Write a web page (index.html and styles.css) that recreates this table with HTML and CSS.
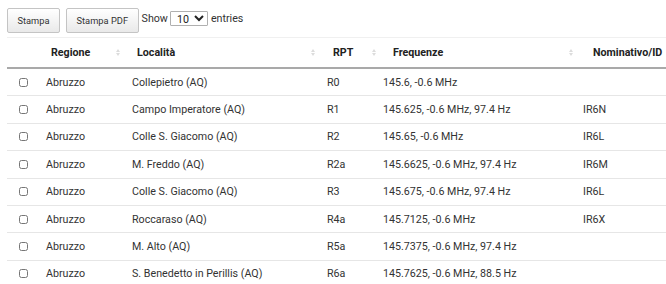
FILE: index.html
```html
<!DOCTYPE html>
<html lang="it">
<head>
<meta charset="utf-8">
<title>Ponti radio</title>
<link rel="stylesheet" href="styles.css">
</head>
<body>
<div class="toolbar">
  <button class="dt-button" type="button">Stampa</button>
  <button class="dt-button" type="button">Stampa PDF</button>
  <label class="length">Show
    <select class="length-select">
      <option>10</option>
      <option>25</option>
      <option>50</option>
      <option>100</option>
    </select>
    entries</label>
</div>
<div class="table">
  <div class="row head">
    <div class="th th-sel"></div>
    <div class="th th-reg sort">Regione</div>
    <div class="th th-loc sort">Località</div>
    <div class="th th-rpt sort">RPT</div>
    <div class="th th-freq sort">Frequenze</div>
    <div class="th th-id">Nominativo/ID</div>
  </div>
  <div class="row"><div class="td sel"><input type="checkbox"></div><div class="td">Abruzzo</div><div class="td">Collepietro (AQ)</div><div class="td">R0</div><div class="td">145.6, -0.6 MHz</div><div class="td"></div></div>
  <div class="row"><div class="td sel"><input type="checkbox"></div><div class="td">Abruzzo</div><div class="td">Campo Imperatore (AQ)</div><div class="td">R1</div><div class="td">145.625, -0.6 MHz, 97.4 Hz</div><div class="td">IR6N</div></div>
  <div class="row"><div class="td sel"><input type="checkbox"></div><div class="td">Abruzzo</div><div class="td">Colle S. Giacomo (AQ)</div><div class="td">R2</div><div class="td">145.65, -0.6 MHz</div><div class="td">IR6L</div></div>
  <div class="row"><div class="td sel"><input type="checkbox"></div><div class="td">Abruzzo</div><div class="td">M. Freddo (AQ)</div><div class="td">R2a</div><div class="td">145.6625, -0.6 MHz, 97.4 Hz</div><div class="td">IR6M</div></div>
  <div class="row"><div class="td sel"><input type="checkbox"></div><div class="td">Abruzzo</div><div class="td">Colle S. Giacomo (AQ)</div><div class="td">R3</div><div class="td">145.675, -0.6 MHz, 97.4 Hz</div><div class="td">IR6L</div></div>
  <div class="row"><div class="td sel"><input type="checkbox"></div><div class="td">Abruzzo</div><div class="td">Roccaraso (AQ)</div><div class="td">R4a</div><div class="td">145.7125, -0.6 MHz</div><div class="td">IR6X</div></div>
  <div class="row"><div class="td sel"><input type="checkbox"></div><div class="td">Abruzzo</div><div class="td">M. Alto (AQ)</div><div class="td">R5a</div><div class="td">145.7375, -0.6 MHz, 97.4 Hz</div><div class="td"></div></div>
  <div class="row"><div class="td sel"><input type="checkbox"></div><div class="td">Abruzzo</div><div class="td">S. Benedetto in Perillis (AQ)</div><div class="td">R6a</div><div class="td">145.7625, -0.6 MHz, 88.5 Hz</div><div class="td"></div></div>
</div>
</body>
</html>
```
FILE: styles.css
```css
html, body {
  overflow: hidden;
}
body {
  margin: 8px 0 0 7px;
  font-family: Roboto, "Liberation Sans", Arial, sans-serif;
  font-size: 10.7px;
  color: #333;
  background: #fff;
}
.toolbar {
  display: flex;
  align-items: flex-start;
  height: 29px;
}
.dt-button {
  box-sizing: border-box;
  height: 25px;
  margin: 0 6px 0 0;
  padding: 0 9.5px;
  font-family: inherit;
  font-size: 9.3px;
  color: #333;
  border: 1px solid #c4c4c4;
  border-radius: 2px;
  background: linear-gradient(to bottom, #ffffff 0%, #e9e9e9 100%);
}
.dt-button + .dt-button {
  margin-right: 3px;
}
.length {
  display: flex;
  align-items: center;
  gap: 2px;
  margin-top: 3px;
  color: #333;
}
.length-select {
  box-sizing: border-box;
  width: 38px;
  height: 15px;
  margin: 0 1px 0 0;
  padding: 0 0 0 2px;
  font: inherit;
  font-size: 10.7px;
  color: #222;
  border: 1px solid #b0b0b0;
  border-radius: 1px;
  background: #fff;
}
.table {
  width: 667px;
  border-top: 1px solid #f0f0f0;
}
.row {
  display: grid;
  grid-template-columns: 29px 86px 195px 56px 200px 1fr;
  box-sizing: border-box;
  height: 27.4px;
  align-items: center;
  border-bottom: 1px solid #e6e6e6;
}
.row.head {
  height: 31px;
  border-bottom: 2px solid #a9a9a9;
}
.th {
  position: relative;
  font-weight: 700;
  color: #222;
  height: 100%;
  display: flex;
  align-items: center;
}
.th-reg { padding-left: 15px; }
.th-loc { padding-left: 15px; }
.th-rpt { padding-left: 16px; }
.th-freq { padding-left: 20px; }
.th-id { padding-left: 20px; }
.sort::before,
.sort::after {
  content: "";
  position: absolute;
  right: var(--icon-right, 3px);
  width: 0;
  height: 0;
  border-left: 2px solid transparent;
  border-right: 2px solid transparent;
}
.sort::before {
  top: calc(50% - 3.5px);
  border-bottom: 3px solid #dcdcdc;
}
.sort::after {
  top: calc(50% + 0.5px);
  border-top: 3px solid #dcdcdc;
}
.th-reg { --icon-right: 2px; }
.th-loc { --icon-right: 2px; }
.th-rpt { --icon-right: -3px; }
.th-freq { --icon-right: 0px; }
.td {
  padding-left: 10px;
  white-space: nowrap;
  color: #333;
}
.td.sel {
  padding-left: 12px;
  display: flex;
  align-items: center;
}
.td.sel input {
  width: 9px;
  height: 9px;
  margin: 0;
}
```
